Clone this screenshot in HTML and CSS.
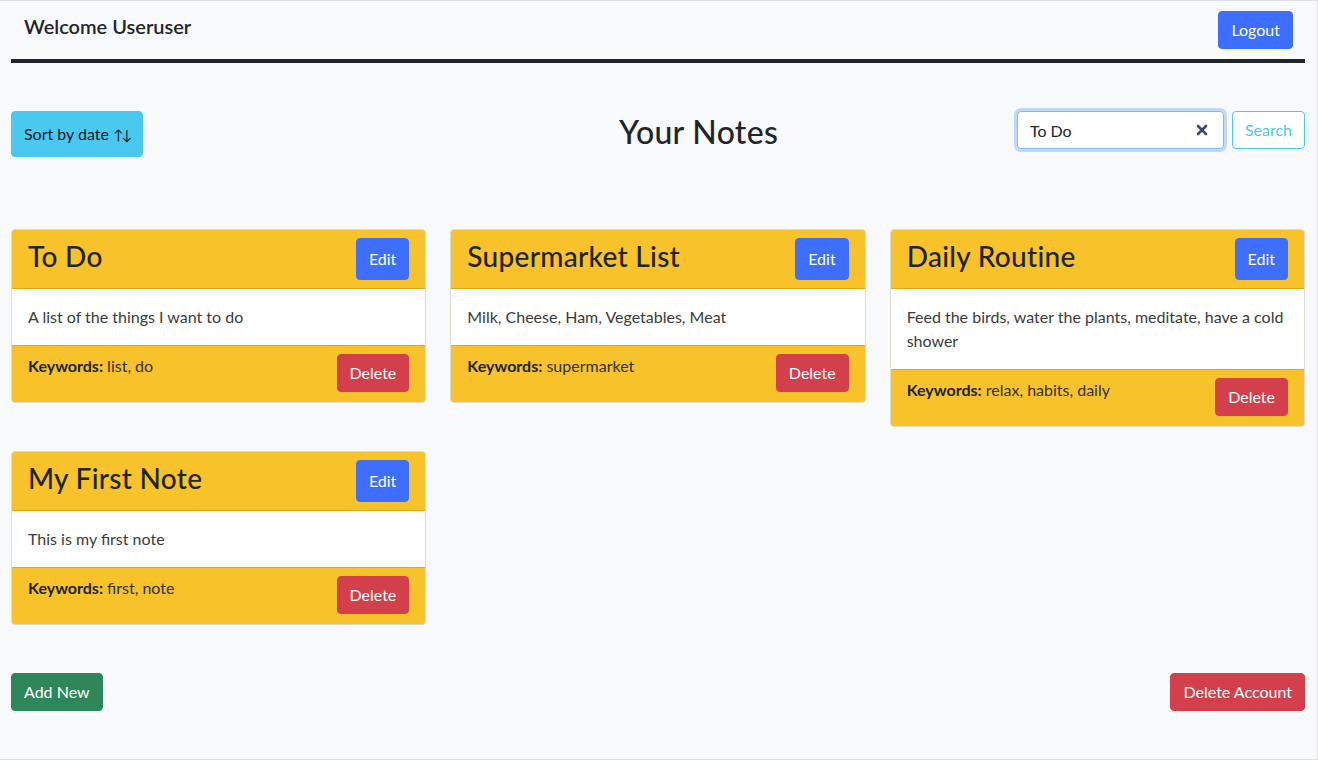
FILE: index.html
```html
<!DOCTYPE html>
<html lang="en">
<head>
<meta charset="utf-8">
<title>Your Notes</title>
<link rel="stylesheet" href="styles.css">
</head>
<body>
<div class="page">
  <nav class="navbar">
    <span class="brand">Welcome Useruser</span>
    <button class="btn btn-primary">Logout</button>
  </nav>
  <div class="rule"></div>

  <div class="toolbar">
    <button class="btn btn-info btn-sort">Sort by date <span class="arrows">↑↓</span></button>
    <h2 class="page-title">Your Notes</h2>
    <form class="search">
      <div class="search-field">
        <input class="search-input" type="text" value="To Do">
        <svg class="clear-icon" width="12" height="12" viewBox="0 0 12 12"><path d="M2 2 L10 10 M10 2 L2 10" stroke="#3b4a6b" stroke-width="2.6" stroke-linecap="round"/></svg>
      </div>
      <button class="btn btn-outline-info" type="button">Search</button>
    </form>
  </div>

  <div class="notes">
    <div class="card">
      <div class="card-header"><h3 class="card-title">To Do</h3><button class="btn btn-primary btn-edit">Edit</button></div>
      <div class="card-body">A list of the things I want to do</div>
      <div class="card-footer"><span><b>Keywords:</b> list, do</span><button class="btn btn-danger">Delete</button></div>
    </div>
    <div class="card">
      <div class="card-header"><h3 class="card-title">Supermarket List</h3><button class="btn btn-primary btn-edit">Edit</button></div>
      <div class="card-body">Milk, Cheese, Ham, Vegetables, Meat</div>
      <div class="card-footer"><span><b>Keywords:</b> supermarket</span><button class="btn btn-danger">Delete</button></div>
    </div>
    <div class="card">
      <div class="card-header"><h3 class="card-title">Daily Routine</h3><button class="btn btn-primary btn-edit">Edit</button></div>
      <div class="card-body">Feed the birds, water the plants, meditate, have a cold shower</div>
      <div class="card-footer"><span><b>Keywords:</b> relax, habits, daily</span><button class="btn btn-danger">Delete</button></div>
    </div>
    <div class="card">
      <div class="card-header"><h3 class="card-title">My First Note</h3><button class="btn btn-primary btn-edit">Edit</button></div>
      <div class="card-body">This is my first note</div>
      <div class="card-footer"><span><b>Keywords:</b> first, note</span><button class="btn btn-danger">Delete</button></div>
    </div>
  </div>

  <div class="bottom-bar">
    <button class="btn btn-success">Add New</button>
    <button class="btn btn-danger">Delete Account</button>
  </div>
</div>
</body>
</html>
```

FILE: styles.css
```css
* { box-sizing: border-box; }
html, body { margin: 0; padding: 0; }
body {
  font-family: "Lato", "Open Sans", sans-serif;
  font-size: 16px;
  line-height: 1.5;
  color: #212529;
  background: #f8f9fa;
}
.page {
  height: 760px;
  border-top: 1px solid #dee2e6;
  border-right: 1px solid #dee2e6;
  border-bottom: 1px solid #dee2e6;
  padding: 0 12px 0 11px;
  background: #f8f9fa;
}
.navbar {
  display: flex;
  justify-content: space-between;
  align-items: flex-start;
  padding: 10px 12px 10px 13px;
}
.brand {
  font-size: 20px;
  line-height: 30px;
  font-weight: 600;
}
.rule {
  height: 4px;
  background: #212529;
}
.btn {
  font-family: inherit;
  font-size: 16px;
  line-height: 24px;
  padding: 6px 12px;
  border: 1px solid transparent;
  border-radius: 4px;
  cursor: pointer;
  color: #fff;
  background: transparent;
}
.btn-primary { background: #3d6efd; border-color: #3d6efd; }
.btn-danger { background: #d3404b; border-color: #d3404b; }
.btn-success { background: #2e8659; border-color: #2e8659; }
.btn-info { background: #49c9ef; border-color: #49c9ef; color: #101828; }
.btn-outline-info { color: #49c9ef; border-color: #49c9ef; background: #fff; }
.btn-sort { width: 132px; height: 46px; padding: 10px 0; text-align: center; white-space: nowrap; }
.arrows { font-size: 14px; letter-spacing: -2px; line-height: 1; }
.btn-edit { padding: 8px 12px; }

.toolbar {
  display: flex;
  align-items: flex-start;
  margin-top: 48px;
}
.page-title {
  margin: -1px 0 0 476px;
  font-size: 32px;
  line-height: 44px;
  font-weight: 500;
  letter-spacing: 0.3px;
}
.search {
  margin: 0 0 0 auto;
  display: flex;
  gap: 8px;
}
.search-field {
  position: relative;
}
.search-input {
  width: 207px;
  height: 38px;
  font-family: inherit;
  font-size: 16px;
  padding: 6px 12px;
  border: 1px solid #86b7fe;
  border-radius: 4px;
  box-shadow: 0 0 0 3px #c3d7fb;
  outline: none;
  color: #212529;
  background: #fff;
}
.clear-icon {
  position: absolute;
  right: 16px;
  top: 13px;
}

.notes {
  display: grid;
  grid-template-columns: repeat(3, 1fr);
  gap: 24px 24px;
  align-items: start;
  margin-top: 72px;
}
.card {
  border: 1px solid #dcdcd0;
  border-radius: 4px;
  overflow: hidden;
  background: #f7c22a;
}
.card-header {
  display: flex;
  justify-content: space-between;
  align-items: center;
  padding: 8px 16px;
  border-bottom: 1px solid #deaa1a;
}
.card-title {
  margin: 0 0 6px 0;
  font-size: 28px;
  line-height: 34px;
  font-weight: 500;
  letter-spacing: 0.3px;
}
.card-body {
  background: #fff;
  padding: 16px;
  color: #3b3b3b;
}
.card-footer {
  display: flex;
  justify-content: space-between;
  align-items: flex-start;
  padding: 8px 16px 10px;
  border-top: 1px solid #deaa1a;
  color: #333;
}
.card-footer b { color: #212529; }

.bottom-bar {
  display: flex;
  justify-content: space-between;
  margin-top: 48px;
}
```
